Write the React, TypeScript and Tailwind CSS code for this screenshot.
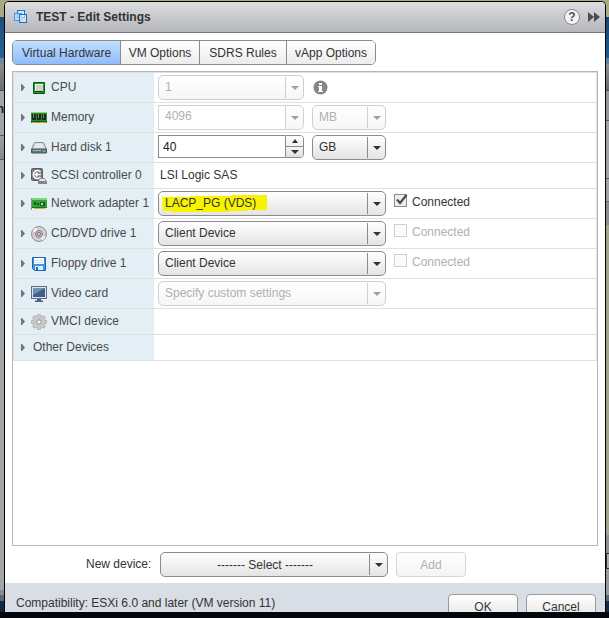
import { useState } from "react";
import type { ReactNode } from "react";
import clsx from "clsx";

/* ---------- icons ---------- */

function VmIcon() {
  return (
    <svg width="14" height="14" viewBox="0 0 14 14" fill="none" className="shrink-0">
      <rect x="3.5" y="0.5" width="7" height="7" fill="#d3e9f9" stroke="#1577c9" />
      <rect x="0.5" y="3.5" width="7" height="7" fill="#bfe0f8" fillOpacity="0.7" stroke="#3d9be6" />
      <rect x="5.5" y="4.5" width="7" height="8" fill="#e4f3fd" fillOpacity="0.6" stroke="#1577c9" />
    </svg>
  );
}

function CpuIcon() {
  return (
    <svg width="16" height="16" viewBox="0 0 16 16" className="shrink-0">
      <rect x="2" y="2" width="12" height="12" rx="1" fill="#0b5a12" />
      <rect x="3" y="3" width="10" height="10" fill="#2c9a2c" />
      <rect x="4" y="4" width="8" height="8" fill="#0a3d0c" />
      <rect x="4" y="4" width="8" height="7" fill="#f4f5f4" />
      <rect x="5" y="5" width="7" height="6" fill="#cfd2d0" />
      <path d="M3 13h2v1H3zM11 13h2v1h-2z" fill="#062f09" />
    </svg>
  );
}

function MemoryIcon() {
  return (
    <svg width="16" height="16" viewBox="0 0 16 16" shapeRendering="crispEdges" className="shrink-0">
      <rect x="0" y="2" width="16" height="11" fill="#2f8a2c" />
      <rect x="0" y="2" width="16" height="1" fill="#8fcf7f" />
      <path d="M1 4h4v6H1zM6 4h4v6H6zM11 4h4v6h-4z" fill="#1f2b20" />
      <path d="M2 4h1v4H2zM7 4h1v4H7zM12 4h1v4h-1z" fill="#6a806b" />
      <rect x="0" y="11" width="16" height="1" fill="#135a17" />
      <path d="M1 12h6v1H1zM8 12h7v1H8z" fill="#c7a43c" />
    </svg>
  );
}

function DiskIcon() {
  return (
    <svg width="16" height="16" viewBox="0 0 16 16" className="shrink-0">
      <path d="M3.5 2.5h9l3 7h-15z" fill="#cfd5db" stroke="#87919b" />
      <path d="M4.5 3.5h7l2 5h-11z" fill="#e4e9ed" />
      <path d="M0.5 9h15v4h-15z" fill="#66727d" stroke="#4b5660" />
      <path d="M2 10.5h8" stroke="#a9b3bb" />
      <rect x="12" y="10" width="2" height="2" fill="#58c93f" />
    </svg>
  );
}

function ScsiIcon() {
  return (
    <svg width="16" height="16" viewBox="0 0 16 16" className="shrink-0">
      <rect x="0.5" y="0.5" width="11" height="12" rx="1" fill="#777" stroke="#5d5d5d" />
      <path d="M9.5 4A4 4 0 1 0 9.500 9" fill="none" stroke="#fff" strokeWidth="1.6" />
      <path d="M3.5 6.5H10M6.500 4.500l-2 2 2 2" fill="none" stroke="#fff" strokeWidth="1.4" />
      <path d="M8.500 10.500h5l2 3h-8z" fill="#e3e5e6" stroke="#8b9298" />
      <rect x="7" y="13" width="9" height="3" fill="#7c858c" />
      <rect x="13" y="14" width="1" height="1" fill="#7bdc5a" />
    </svg>
  );
}

function NicIcon() {
  return (
    <svg width="16" height="16" viewBox="0 0 16 16" shapeRendering="crispEdges" className="shrink-0">
      <path d="M0 2h1v12H0z" fill="#8a8f8a" />
      <path d="M1 2h15v10H1z" fill="#35a33a" />
      <path d="M1 2h15v2H1z" fill="#83d27a" />
      <path d="M1 11h15v1H1z" fill="#16701d" />
      <path d="M3 6h2v3H3zM6 7h2v2H6zM9 6h5v4H9z" fill="#155d1b" />
      <path d="M10 7h2v2h-2z" fill="#b9e6b0" />
      <path d="M3 12h11v1H3z" fill="#c9b04a" />
    </svg>
  );
}

function CdIcon() {
  return (
    <svg width="16" height="16" viewBox="0 0 16 16" className="shrink-0">
      <circle cx="8" cy="8" r="7.500" fill="#d2d0d3" stroke="#8f8f92" />
      <path d="M8 8L1.500 5A7 7 0 0 1 5 1.700z" fill="#f3f0f4" />
      <path d="M8 8l6.500 3A7 7 0 0 1 11 14.300z" fill="#f3f0f4" />
      <path d="M8 8L1 9a7 7 0 0 1 0-3z" fill="#dcb6dc" />
      <circle cx="8" cy="8" r="3.500" fill="#c4c2c6" stroke="#828086" />
      <circle cx="8" cy="8" r="1.500" fill="#fff" stroke="#66646a" />
    </svg>
  );
}

function FloppyIcon() {
  return (
    <svg width="16" height="16" viewBox="0 0 16 16" className="shrink-0">
      <path d="M1.500 1.500h13v13h-11l-2-2z" fill="#3c96e6" stroke="#1b68b8" />
      <rect x="3" y="2" width="10" height="6" fill="#fff" />
      <path d="M3 4.500h10M3 6.500h10" stroke="#d8e4ee" />
      <rect x="4" y="10" width="8" height="4" fill="#e4ebf1" />
      <rect x="5" y="11" width="2" height="3" fill="#1b68b8" />
    </svg>
  );
}

function VideoIcon() {
  return (
    <svg width="16" height="16" viewBox="0 0 16 16" className="shrink-0">
      <rect x="0.500" y="0.500" width="15" height="12" fill="#dde5ec" stroke="#5c6f83" />
      <rect x="2" y="2" width="12" height="9" fill="#3d5f88" />
      <path d="M2 2h12L2 9z" fill="#6f91b5" />
      <path d="M6 13h4v1.500h2V16H4v-1.500h2z" fill="#47617f" />
    </svg>
  );
}

function GearIcon() {
  return (
    <svg width="16" height="16" viewBox="0 0 16 16" className="shrink-0">
      {[0, 45, 90, 135].map((angle) => (
        <rect
          key={angle}
          x="6.300"
          y="0.400"
          width="3.400"
          height="15.200"
          rx="1"
          fill="#cdcdcd"
          stroke="#979797"
          strokeWidth="0.700"
          transform={`rotate(${angle} 8 8)`}
        />
      ))}
      <circle cx="8" cy="8" r="5.500" fill="#c9c9c9" />
      <circle cx="8" cy="8" r="2.200" fill="#f1f5f8" stroke="#909090" />
    </svg>
  );
}

function InfoIcon() {
  return (
    <svg width="15" height="15" viewBox="0 0 15 15" role="img" aria-label="Information">
      <circle cx="7.500" cy="7.500" r="7" fill="#858585" />
      <path d="M6 3h3v2H6zM5 6h4v5h1v1H5v-1h1V7H5z" fill="#fff" />
    </svg>
  );
}

/* ---------- controls ---------- */

function Arrow({ up, dim }: { up?: boolean; dim?: boolean }) {
  return (
    <svg width="8" height="4" viewBox="0 0 8 4" className={dim ? "text-[#a0a0a0]" : "text-[#333]"}>
      <path d={up ? "M1 4h6L4 0z" : "M0 0h8L4 4z"} fill="currentColor" />
    </svg>
  );
}

type SelectProps = {
  label: string;
  value: string;
  disabled?: boolean;
  center?: boolean;
  highlight?: boolean;
  className: string;
};

function Select({ label, value, disabled, center, highlight, className }: SelectProps) {
  return (
    <div
      className={clsx(
        "relative isolate h-[25px] shrink-0 rounded-[5px] border bg-linear-to-b",
        disabled ? "border-[#cfcfcf] from-white to-[#f6f6f6]" : "border-[#8b8b8b] from-white to-[#e4e4e4]",
        className
      )}
    >
      {highlight && (
        <svg
          width="106"
          height="20"
          viewBox="0 0 106 20"
          className="absolute top-0.5 left-[3px] -z-10"
        >
          <path d="M0 3h28V2h42V1h35v15H86v1H66v1H10v-1H1z" fill="#f8f400" />
        </svg>
      )}
      <select
        aria-label={label}
        disabled={disabled}
        className={clsx(
          "block h-full w-full appearance-none bg-transparent pr-[18px] text-xs opacity-100",
          center ? "text-center" : "pb-0.5 pl-1.5",
          disabled ? "text-[#b0b0b0]" : "text-[#333]"
        )}
      >
        <option>{value}</option>
      </select>
      <span
        className={clsx(
          "pointer-events-none absolute inset-y-px right-0 flex w-[18px] items-center justify-center border-l",
          disabled ? "border-[#cfcfcf]" : "border-[#8b8b8b]"
        )}
      >
        <Arrow dim={disabled} />
      </span>
    </div>
  );
}

function MemoryField() {
  return (
    <div className="flex h-[25px] w-[146px]">
      <input
        aria-label="Memory size"
        defaultValue="4096"
        disabled
        className="w-0 flex-1 border border-r-0 border-[#d2d2d2] bg-white px-1.5 pb-1 text-xs text-[#b0b0b0]"
      />
      <button
        disabled
        aria-label="Memory presets"
        className="flex w-[19px] items-center justify-center rounded-r-[5px] border border-[#d2d2d2] bg-linear-to-b from-white to-[#f6f6f6]"
      >
        <Arrow dim />
      </button>
    </div>
  );
}

function DiskField() {
  const [size, setSize] = useState(40);

  return (
    <div className="flex h-[23px] w-[146px]">
      <input
        aria-label="Hard disk 1 size"
        value={size}
        onChange={(e) => setSize(Number(e.target.value) || 0)}
        className="w-0 flex-1 border border-r-0 border-[#8b8b8b] bg-white px-1 text-xs text-[#222] outline-none"
      />
      <div className="flex w-[19px] flex-col divide-y divide-[#8b8b8b] overflow-hidden rounded-r-[4px] border border-[#8b8b8b]">
        <button
          aria-label="Increase"
          onClick={() => setSize(size + 1)}
          className="flex flex-1 items-center justify-center bg-linear-to-b from-white to-[#f0f0f0]"
        >
          <Arrow up />
        </button>
        <button
          aria-label="Decrease"
          onClick={() => setSize(size - 1)}
          className="flex flex-1 items-center justify-center bg-linear-to-b from-[#f4f4f4] to-[#e0e0e0]"
        >
          <Arrow />
        </button>
      </div>
    </div>
  );
}

function Connected({ checked, disabled }: { checked?: boolean; disabled?: boolean }) {
  return (
    <label
      className={clsx("ml-2 flex items-start gap-[5px]", disabled ? "text-[#b0b0b0]" : "text-[#333]")}
    >
      <span className="grid">
        <input
          type="checkbox"
          defaultChecked={checked}
          disabled={disabled}
          className={clsx(
            "peer col-start-1 row-start-1 size-[13px] appearance-none border",
            disabled ? "border-[#cfcfcf] bg-[#fbfbfb]" : "border-[#8b8b8b] bg-[#eee]"
          )}
        />
        <svg
          width="13"
          height="13"
          viewBox="0 0 13 13"
          fill="none"
          className="pointer-events-none col-start-1 row-start-1 hidden overflow-visible peer-checked:block"
        >
          <path d="M3 5.500l3 3.500L12.500 1" stroke="#4a4a4a" strokeWidth="2.200" />
        </svg>
      </span>
      <span className="leading-4">Connected</span>
    </label>
  );
}

/* ---------- device list ---------- */

type Device = {
  name: string;
  icon?: ReactNode;
  short?: boolean;
  control?: ReactNode;
};

const wide = "w-[228px]";

const devices: Device[] = [
  {
    name: "CPU",
    icon: <CpuIcon />,
    control: (
      <>
        <Select label="CPU" value="1" disabled className="w-[146px]" />
        <span className="ml-[9px] flex h-[25px] items-center">
          <InfoIcon />
        </span>
      </>
    ),
  },
  {
    name: "Memory",
    icon: <MemoryIcon />,
    control: (
      <>
        <MemoryField />
        <Select label="Memory unit" value="MB" disabled className="ml-2 w-[74px]" />
      </>
    ),
  },
  {
    name: "Hard disk 1",
    icon: <DiskIcon />,
    control: (
      <>
        <DiskField />
        <Select label="Hard disk unit" value="GB" className="ml-2 w-[74px]" />
      </>
    ),
  },
  {
    name: "SCSI controller 0",
    icon: <ScsiIcon />,
    short: true,
    control: <span className="pl-0.5 leading-5 text-[#333]">LSI Logic SAS</span>,
  },
  {
    name: "Network adapter 1",
    icon: <NicIcon />,
    control: (
      <>
        <Select label="Network adapter 1" value="LACP_PG (VDS)" highlight className={wide} />
        <span className="pt-[3px]">
          <Connected checked />
        </span>
      </>
    ),
  },
  {
    name: "CD/DVD drive 1",
    icon: <CdIcon />,
    control: (
      <>
        <Select label="CD/DVD drive 1" value="Client Device" className={wide} />
        <span className="pt-[3px]">
          <Connected disabled />
        </span>
      </>
    ),
  },
  {
    name: "Floppy drive 1",
    icon: <FloppyIcon />,
    control: (
      <>
        <Select label="Floppy drive 1" value="Client Device" className={wide} />
        <span className="pt-[3px]">
          <Connected disabled />
        </span>
      </>
    ),
  },
  {
    name: "Video card",
    icon: <VideoIcon />,
    control: <Select label="Video card" value="Specify custom settings" disabled className={wide} />,
  },
  { name: "VMCI device", icon: <GearIcon />, short: true },
  { name: "Other Devices", short: true },
];

function DeviceRow({ name, icon, short, control }: Device) {
  return (
    <div className={clsx("flex border-b border-[#e0e0e0]", short ? "h-[26px]" : "h-[30px]")}>
      <div className="flex w-[140px] shrink-0 items-center bg-[#e3eff5] pl-[7px] whitespace-nowrap text-[#4a4a4a]">
        <button aria-label={`Expand ${name}`} className={icon ? "mr-1.5" : "mr-2"}>
          <svg width="4" height="7" viewBox="0 0 4 7" className="block">
            <path d="M0 0h1l3 3.500L1 7H0z" fill="#757575" />
          </svg>
        </button>
        {icon}
        <span className={clsx("pb-0.5 leading-4", icon && "ml-1")}>{name}</span>
      </div>
      <div className="flex flex-1 items-start pt-0.5 pl-1">{control}</div>
    </div>
  );
}

/* ---------- page behind the dialog ---------- */

function LeftStrip() {
  return (
    <div className="flex w-1 shrink-0 flex-col overflow-hidden">
      <div className="h-4" />
      <div className="h-[41px] bg-linear-to-b from-[#1c4d7c] to-[#25639a]" />
      <div className="h-1.5 bg-[#70879b]" />
      <div className="h-[27px] border-b border-[#4c4c50] bg-linear-to-b from-[#8d8e93] to-[#6b6c70]" />
      <div className="h-[45px] border-b border-[#58595c] bg-[#a2a3a7] pt-2 text-xs font-bold text-[#222]">
        <span className="flex justify-end leading-5">n</span>
      </div>
      <div className="h-6 border-b border-[#58595c] bg-linear-to-b from-[#a0a1a5] to-[#86878b]" />
      <div className="flex-1 bg-[#a4a5a8]" />
      <div className="h-[5px] bg-[#8a8a8d]" />
      <div className="h-1.5 bg-[#596777]" />
      <div className="h-[11px] bg-[#122942]" />
    </div>
  );
}

function RightStrip() {
  return (
    <div className="flex w-[3px] shrink-0 flex-col overflow-hidden">
      <div className="h-4" />
      <div className="h-[41px] bg-linear-to-b from-[#17456f] to-[#1d5d94]" />
      <div className="h-1.5 bg-[#64809a]" />
      <div className="h-[27px] border-b border-[#4c4c50] bg-linear-to-b from-[#8d8e93] to-[#6b6c70]" />
      <div className="h-[30px] border-b border-[#58595c] bg-[#96979b]" />
      <div className="h-[58px] border-b border-[#58595c] bg-[#a2a3a7]" />
      <div className="h-[23px] border-b border-[#6c6d70] bg-[#a2a3a7]" />
      <div className="h-[23px] bg-[#8c8d91]" />
      <div className="flex-1 bg-[#a3a78d]" />
      <div className="h-[18px] bg-[#8f9092]" />
      <div className="h-4 border-y border-l border-[#333] bg-[#aaa]" />
      <div className="h-[26px] bg-[#98999b]" />
      <div className="h-1.5 bg-[#596777]" />
      <div className="h-[11px] bg-[#0f2b48]" />
    </div>
  );
}

/* ---------- dialog ---------- */

const tabs = [
  { name: "Virtual Hardware", width: "w-[107px]" },
  { name: "VM Options", width: "w-[79px]" },
  { name: "SDRS Rules", width: "w-[87px]" },
  { name: "vApp Options", width: "w-[89px]" },
];

export default function App() {
  const [tab, setTab] = useState(tabs[0].name);

  return (
    <div className="flex h-screen flex-col bg-[#a9aa80] pt-px font-['Liberation_Sans',Arial,sans-serif] text-xs">
      <div className="flex min-h-0 flex-1">
        <LeftStrip />
        <main className="flex min-w-0 flex-1 flex-col overflow-hidden rounded-t-[5px] border border-b-0 border-black bg-white">
          <header className="flex h-[31px] shrink-0 items-center border-b border-[#77787b] bg-linear-to-b from-[#dcdde0] to-[#b5b6ba] pr-[5px] pl-[9px]">
            <VmIcon />
            <h1 className="ml-2 flex-1 font-bold text-[#333]">TEST - Edit Settings</h1>
            <button
              aria-label="Help"
              className="mr-2 flex size-4 items-center justify-center rounded-full border border-[#8a8a8a] bg-[#f4f4f4] font-bold text-[#555]"
            >
              ?
            </button>
            <button aria-label="Minimize">
              <svg width="12" height="10" viewBox="0 0 12 10" className="block">
                <path d="M0 0l6 5-6 5zM6 0l6 5-6 5z" fill="#4c4d50" />
              </svg>
            </button>
          </header>

          <section className="flex min-h-0 flex-1 flex-col px-[7px] py-1.5">
            <div
              role="tablist"
              className="mt-px flex h-[25px] shrink-0 self-start overflow-hidden rounded-[5px] border border-[#8b8b8b]"
            >
              {tabs.map(({ name, width }) => (
                <button
                  key={name}
                  role="tab"
                  aria-selected={tab === name}
                  onClick={() => setTab(name)}
                  className={clsx(
                    "border-l border-[#8b8b8b] bg-linear-to-b whitespace-nowrap text-[#333] first:border-l-0",
                    width,
                    tab === name ? "from-[#c2e0ff] to-[#8ebbfc]" : "from-white to-[#ececec]"
                  )}
                >
                  {name}
                </button>
              ))}
            </div>

            <div className="mt-1.5 min-h-0 flex-1 overflow-hidden border border-[#b4b6b8]">
              <div className="border border-b-0 border-[#e0e0e0]">
                {devices.map((device) => (
                  <DeviceRow key={device.name} {...device} />
                ))}
              </div>
            </div>

            <div className="mt-1.5 flex shrink-0 items-center pl-[74px]">
              <span className="w-[74px] pb-0.5 text-[#333]">New device:</span>
              <Select label="New device" value="------- Select -------" center className={wide} />
              <button
                disabled
                className="ml-2 h-[25px] w-[70px] rounded-[4px] border border-[#d6d6d6] bg-linear-to-b from-white to-[#f4f4f4] text-[#b0b0b0]"
              >
                Add
              </button>
            </div>
          </section>

          <footer className="flex h-[29px] shrink-0 items-start gap-2 overflow-hidden bg-[#d9dde6] pr-[9px] pl-[11px] text-[#333]">
            <span className="flex-1 pt-3 leading-4">
              Compatibility: ESXi 6.0 and later (VM version 11)
            </span>
            {["OK", "Cancel"].map((name) => (
              <button
                key={name}
                className="mt-[11px] h-[25px] w-[70px] shrink-0 rounded-[4px] border border-[#9a9a9a] bg-linear-to-b from-white to-[#e6e6e6]"
              >
                {name}
              </button>
            ))}
          </footer>
        </main>
        <RightStrip />
      </div>
      <div className="h-1.5 shrink-0 bg-[#03060d]" />
    </div>
  );
}
